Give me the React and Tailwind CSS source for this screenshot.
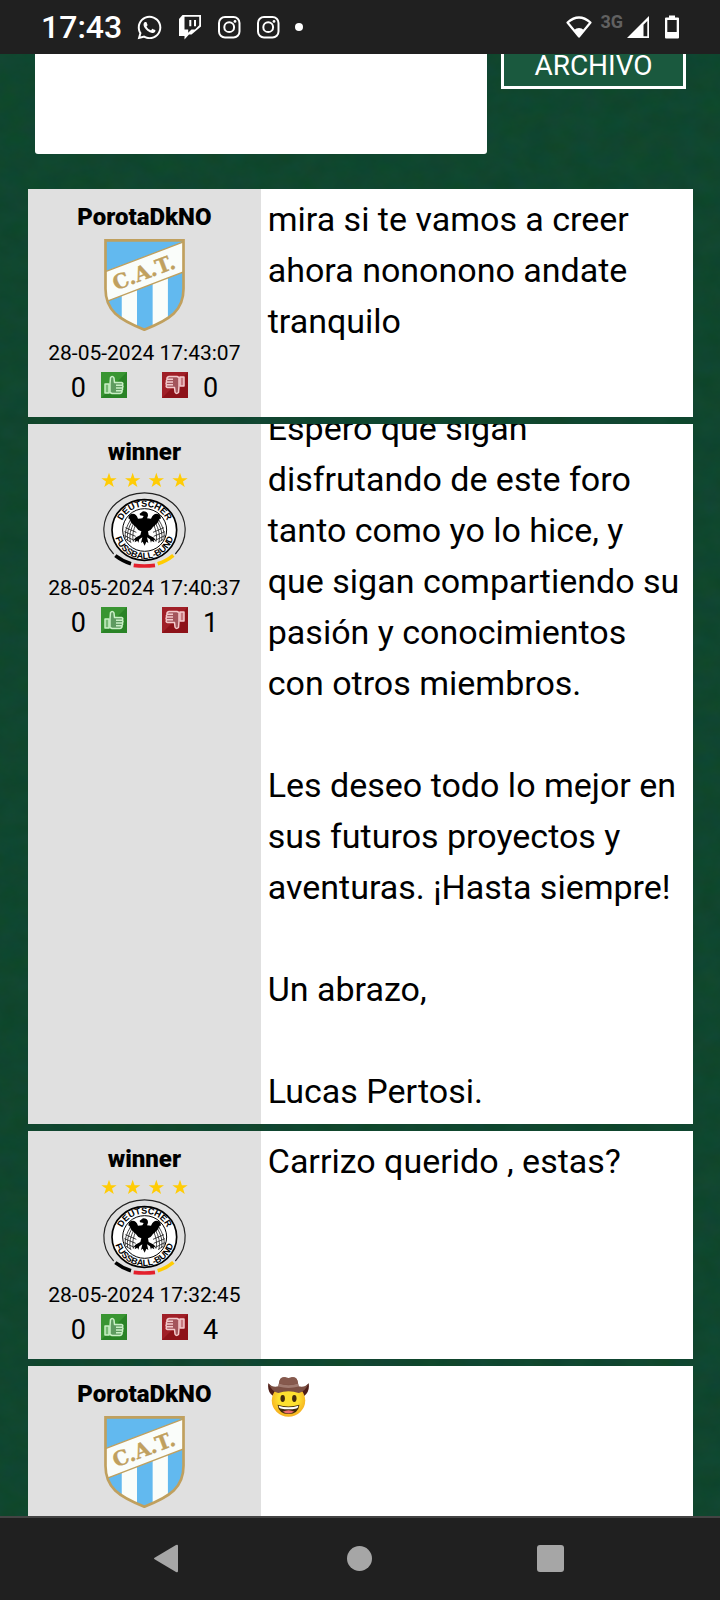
import React from "react";
import { FaWhatsapp } from "react-icons/fa";

const STAR = "M24 0l5.6 16.4H47L33 26.6l5.2 16.6L24 33.2 9.800 43.2 15 26.600 1 16.400h17.400z";

function Instagram() {
  return (
    <svg viewBox="0 0 24 24" className="size-6" fill="none" stroke="#fff" strokeWidth="2" aria-hidden="true">
      <rect x="2" y="2" width="20.500" height="20.500" rx="6" />
      <circle cx="12.200" cy="12.200" r="4.900" />
      <circle cx="18" cy="6.400" r="1.400" fill="#fff" stroke="none" />
    </svg>
  );
}

function Twitch() {
  return (
    <svg viewBox="0 0 24 26" className="h-[26px] w-6" fill="#fff" aria-hidden="true">
      <path fillRule="evenodd" d="M4.500 1H23v11.500L13.500 20.500h-2.500L6.500 25.500V22H1V5zM6.500 2.800v12.700h3.700v3.200l3.300-3.200h3.500l4.200-4.200V2.800z" />
      <path d="M11.300 6h2v6.200h-2zM16 6h2v6.200h-2z" />
    </svg>
  );
}

function StatusBar() {
  return (
    <header className="flex h-[54px] shrink-0 items-center justify-between bg-[#202020] px-[41px] text-white">
      <div className="flex items-center">
        <time className="text-[32px] leading-10 font-medium">17:43</time>
        <div className="ml-3.5 flex items-center gap-[15px]">
          <FaWhatsapp className="size-[27px]" aria-hidden="true" />
          <Twitch />
          <Instagram />
          <Instagram />
          <span className="size-2 rounded-full bg-white" />
        </div>
      </div>
      <div className="flex items-center">
        <svg viewBox="0 0 26 22" className="h-[22px] w-[26px]" aria-hidden="true">
          <path d="M1.500 6.500Q13-3.500 24.500 6.500L13 20.500z" fill="none" stroke="#fff" strokeWidth="2.200" strokeLinejoin="round" />
          <path d="M7.800 14.200Q13 10 18.200 14.200L13 21.500z" fill="#fff" />
        </svg>
        <span className="mb-2.5 ml-2 text-lg leading-5 font-bold text-[#616161]">3G</span>
        <svg viewBox="0 0 22 22" className="ml-1 h-[22px] w-[22px]" aria-hidden="true">
          <path fillRule="evenodd" d="M22 0v22H0zM20.300 5v15.300h-3.800V8.800z" fill="#fff" />
        </svg>
        <svg viewBox="0 0 14 24" className="ml-4 h-6 w-3.5" aria-hidden="true">
          <path fillRule="evenodd" d="M4 .5h6v2h3q1 0 1 1v19q0 1-1 1H1q-1 0-1-1v-19q0-1 1-1h3zM2.300 5v12h9.400V5z" fill="#fff" />
        </svg>
      </div>
    </header>
  );
}

function TucumanCrest() {
  return (
    <svg viewBox="0 0 243 277" className="h-[92px] w-[81px]" role="img" aria-label="Atlético Tucumán">
      <clipPath id="shield">
        <path d="M4 4H239V150C239 215 200 242 121 273C43 242 4 215 4 150z" />
      </clipPath>
      <g clipPath="url(#shield)">
        <path d="M0 0H243V277H0z" fill="#62b9ef" />
        <path d="M53 100h46v177H53zM146 100h46v177h-46z" fill="#fafdfa" />
        <path d="M4 98L239 9V99L4 189z" fill="#fafdfa" stroke="#c0a05e" strokeWidth="4" />
      </g>
      <path d="M4 4H239V150C239 215 200 242 121 273C43 242 4 215 4 150z" fill="none" stroke="#c0a05e" strokeWidth="8" />
      <text x="0" y="0" transform="translate(35 155) rotate(-20.500)" fontFamily="DejaVu Serif, serif" fontWeight="700" fontSize="61" fill="#c0a05e" stroke="#c0a05e" strokeWidth="1">C.A.T.</text>
    </svg>
  );
}

function GermanyCrest() {
  return (
    <svg viewBox="0 0 261 288" className="h-24 w-[87px]" role="img" aria-label="Deutscher Fussball-Bund">
      {[0, 71, 142, 213].map((x) => (
        <path key={x} d={STAR} transform={`translate(${x} 2)`} fill="#ffcc05" />
      ))}
      <g transform="translate(7 63)">
        <path d="M31 183A122 111 0 1 1 216 183" fill="none" stroke="#222" strokeWidth="3.500" />
        <ellipse cx="123" cy="111" rx="97" ry="91" fill="#fff" stroke="#000" strokeWidth="5" />
        <ellipse cx="124" cy="111" rx="66" ry="64" fill="#fff" stroke="#000" strokeWidth="3" />
        <path d="M36 188Q58 205 83 212" fill="none" stroke="#000" strokeWidth="11" />
        <path d="M91 217Q123 221 155 217" fill="none" stroke="#e3202c" strokeWidth="11" />
        <path d="M163 212Q188 205 210 187" fill="none" stroke="#fc0" strokeWidth="11" />
        <path id="arc-top" d="M51 111A73 70 0 0 1 197 111" fill="none" />
        <path id="arc-bottom" d="M34 98A90 87 0 1 0 212 98" fill="none" />
        <g fontFamily="Liberation Sans, sans-serif" fontWeight="700" fontSize="27" textAnchor="middle" fill="#000">
          <text><textPath href="#arc-top" startOffset="50%">DEUTSCHER</textPath></text>
          <text><textPath href="#arc-bottom" startOffset="50%">FUSSBALL-BUND</textPath></text>
        </g>
        <g fill="none" stroke="#222" strokeWidth="2.500">
          <path d="M82 80Q62 112 66 136M87 84Q68 114 73 143M93 88Q75 118 81 148M99 92Q84 120 90 146M66 104L99 118M63 116L97 130M64 128L92 142M67 138L84 149" />
          <path d="M166 80Q186 112 182 136M161 84Q180 114 175 143M155 88Q173 118 167 148M149 92Q164 120 158 146M182 104L149 118M185 116L151 130M184 128L156 142M181 138L164 149" />
        </g>
        <path d="M109 62L119 55Q134 55 134 67Q133 73 131 76L143 77Q149 62 160 62Q175 64 172 78Q166 76 168 82Q164 82 165 88Q160 88 160 94Q155 93 154 100Q149 98 147 105Q143 112 134 115L136 126L152 134L158 144L151 140L153 148L145 143L143 149L140 139L131 133L135 150L129 146L124 158L118 146L113 150L117 133L108 139L105 149L102 143L94 148L96 140L89 144L96 134L111 126L114 115Q103 112 100 105Q97 98 93 100Q92 93 87 94Q87 88 82 88Q83 82 79 82Q81 76 76 78Q73 64 88 62Q99 62 104 77L117 76L121 69L110 67z" fill="#000" />
      </g>
    </svg>
  );
}

function Thumb({ down }) {
  return (
    <svg viewBox="0 0 26 26" className="size-[26px]" aria-hidden="true">
      <path d="M0 0h26v26H0z" fill={down ? "#8d1219" : "#298326"} />
      <path d="M0 0h26L0 26z" fill={down ? "#ad2830" : "#45a23a"} opacity=".6" />
      <g transform={down ? "rotate(180 13 13)" : undefined} strokeLinejoin="round" stroke={down ? "#f3c9cb" : "#c9efc5"} strokeWidth="1.500">
        <path d="M4 12h4v9H4z" fill={down ? "#c77a80" : "#76b973"} />
        <path d="M9 12L9.500 5.500Q12 3.500 13 6L13.500 10.500H20.500Q22.500 11 21.500 13Q22.500 14.500 21.500 16Q22 17.500 21 18.500Q21.500 21 19 21.500H11L9 20.500z" fill={down ? "#a4555c" : "#5e9b60"} />
        <path d="M15 13.300h6M15 16h6M15 18.700h6" fill="none" />
      </g>
    </svg>
  );
}

function Cowboy() {
  return (
    <svg viewBox="0 0 120 117" className="h-10 w-[41px]" role="img" aria-label="🤠">
      <defs>
        <radialGradient id="face" cx=".5" cy=".45" r=".6">
          <stop offset=".5" stopColor="#fde030" />
          <stop offset="1" stopColor="#f5a51d" />
        </radialGradient>
      </defs>
      <path d="M1 18Q-3 46 16 56L105 56Q123 44 119 18L98 40H22z" fill="#4e1d17" />
      <ellipse cx="60" cy="69" rx="49" ry="47" fill="url(#face)" />
      <ellipse cx="43" cy="63" rx="6.500" ry="10" fill="#422b0d" />
      <ellipse cx="77" cy="63" rx="6.500" ry="10" fill="#422b0d" />
      <path d="M28 81Q60 91 92 81Q89 108 60 108Q31 108 28 81z" fill="#422b0d" />
      <path d="M31 84Q60 93 89 84Q88 91 83 92Q60 97 37 92Q32 91 31 84z" fill="#fff" />
      <path d="M43 102Q60 93 77 102Q60 112 43 102z" fill="#ed6b70" />
      <path d="M1 18Q14 32 30 27L34 10Q38-1 50 1Q60 5 70 1Q82-1 86 10L90 27Q106 32 119 18Q110 41 90 47Q60 37 30 47Q10 41 1 18z" fill="#7c5044" />
      <path d="M32 19Q60 29 88 19L90 28Q60 36 30 28z" fill="#a17b70" />
      <path d="M34 10Q38-1 50 1Q60 5 70 1Q82-1 86 10L88 19Q60 27 32 19z" fill="#86594d" />
    </svg>
  );
}

function Post({ name, crest, date, up, down, tall, children }) {
  return (
    <article className={`flex overflow-hidden bg-white ${tall ? "h-[700px]" : "min-h-[228px]"} shrink-0`}>
      <aside className="flex w-[35%] shrink-0 flex-col items-center bg-[#e0e0e0] pt-3.5">
        <h2 className="text-2xl leading-7 font-black">{name}</h2>
        <div className="mb-0.5 flex h-[107px] items-center">{crest}</div>
        <time className="text-[21px] leading-[26px]">{date}</time>
        <div className="mt-1.5 flex items-end gap-[15px] text-[27px] leading-5">
          <span>{up}</span>
          <button type="button" aria-label="Me gusta" className="mr-5"><Thumb /></button>
          <button type="button" aria-label="No me gusta"><Thumb down /></button>
          <span>{down}</span>
        </div>
      </aside>
      <div className={`flex min-w-0 flex-1 flex-col gap-[51px] px-[7px] text-[34px] leading-[51px] ${tall ? "justify-end pb-[7px]" : "pt-[5px]"}`}>
        {children}
      </div>
    </article>
  );
}

export default function App() {
  return (
    <div className="flex h-screen flex-col overflow-hidden bg-[#10472f] font-[Roboto,sans-serif] text-black">
      <StatusBar />
      <main className="relative isolate flex-1 overflow-hidden">
        <svg className="absolute inset-0 -z-10 h-full w-full opacity-15" aria-hidden="true">
          <filter id="felt" colorInterpolationFilters="sRGB" x="0" y="0" width="100%" height="100%">
            <feTurbulence type="fractalNoise" baseFrequency=".04 .05" numOctaves="4" seed="4" />
            <feColorMatrix values=".25 0 0 0 -.06  0 .2 0 0 .17  0 0 .4 0 -.02  0 0 0 0 1" />
          </filter>
          <rect width="100%" height="100%" filter="url(#felt)" />
        </svg>
        <form className="flex items-start gap-3.5 pr-[34px] pl-[35px]" onSubmit={(e) => e.preventDefault()}>
          <textarea aria-label="Mensaje" className="h-[100px] min-w-0 flex-1 resize-none rounded-b-[3px] bg-white p-2 text-2xl outline-none" />
          <button type="button" className="h-[35px] w-[185px] border-3 border-t-0 border-white bg-[#1a593e] pb-2 text-[28px] leading-6 text-white">ARCHIVO</button>
        </form>
        <section className="mt-[35px] flex flex-col gap-[7px] pr-[27px] pl-7">
          <Post name="PorotaDkNO" crest={<TucumanCrest />} date="28-05-2024 17:43:07" up={0} down={0}>
            <p>mira si te vamos a creer ahora nononono andate tranquilo</p>
          </Post>
          <Post tall name="winner" crest={<GermanyCrest />} date="28-05-2024 17:40:37" up={0} down={1}>
            <p>Espero que sigan disfrutando de este foro tanto como yo lo hice, y que sigan compartiendo su pasión y conocimientos con otros miembros.</p>
            <p>Les deseo todo lo mejor en sus futuros proyectos y aventuras. ¡Hasta siempre!</p>
            <p>Un abrazo,</p>
            <p>Lucas Pertosi.</p>
          </Post>
          <Post name="winner" crest={<GermanyCrest />} date="28-05-2024 17:32:45" up={0} down={4}>
            <p>Carrizo querido , estas?</p>
          </Post>
          <article className="flex bg-white">
            <aside className="flex w-[35%] shrink-0 flex-col items-center bg-[#e0e0e0] pt-3.5 pb-2">
              <h2 className="text-2xl leading-7 font-black">PorotaDkNO</h2>
              <div className="flex h-[107px] items-center"><TucumanCrest /></div>
            </aside>
            <div className="px-[7px] pt-[11px]"><Cowboy /></div>
          </article>
        </section>
      </main>
      <nav className="grid h-[84px] shrink-0 grid-cols-3 items-center border-t-2 border-[#444] bg-[#202020] px-[74px] pb-0.5">
        <button type="button" aria-label="Atrás" className="flex justify-center">
          <svg viewBox="0 0 32 29" className="h-[29px] w-8"><path d="M2 13.500Q0 14.500 2 15.500L23 28Q25 29 25 27V2Q25 0 23 1z" fill="#a6a6a6" /></svg>
        </button>
        <button type="button" aria-label="Inicio" className="flex justify-center">
          <span className="size-[25px] rounded-full bg-[#a6a6a6]" />
        </button>
        <button type="button" aria-label="Recientes" className="flex justify-center">
          <span className="size-[27px] rounded-[3px] bg-[#a6a6a6]" />
        </button>
      </nav>
    </div>
  );
}
